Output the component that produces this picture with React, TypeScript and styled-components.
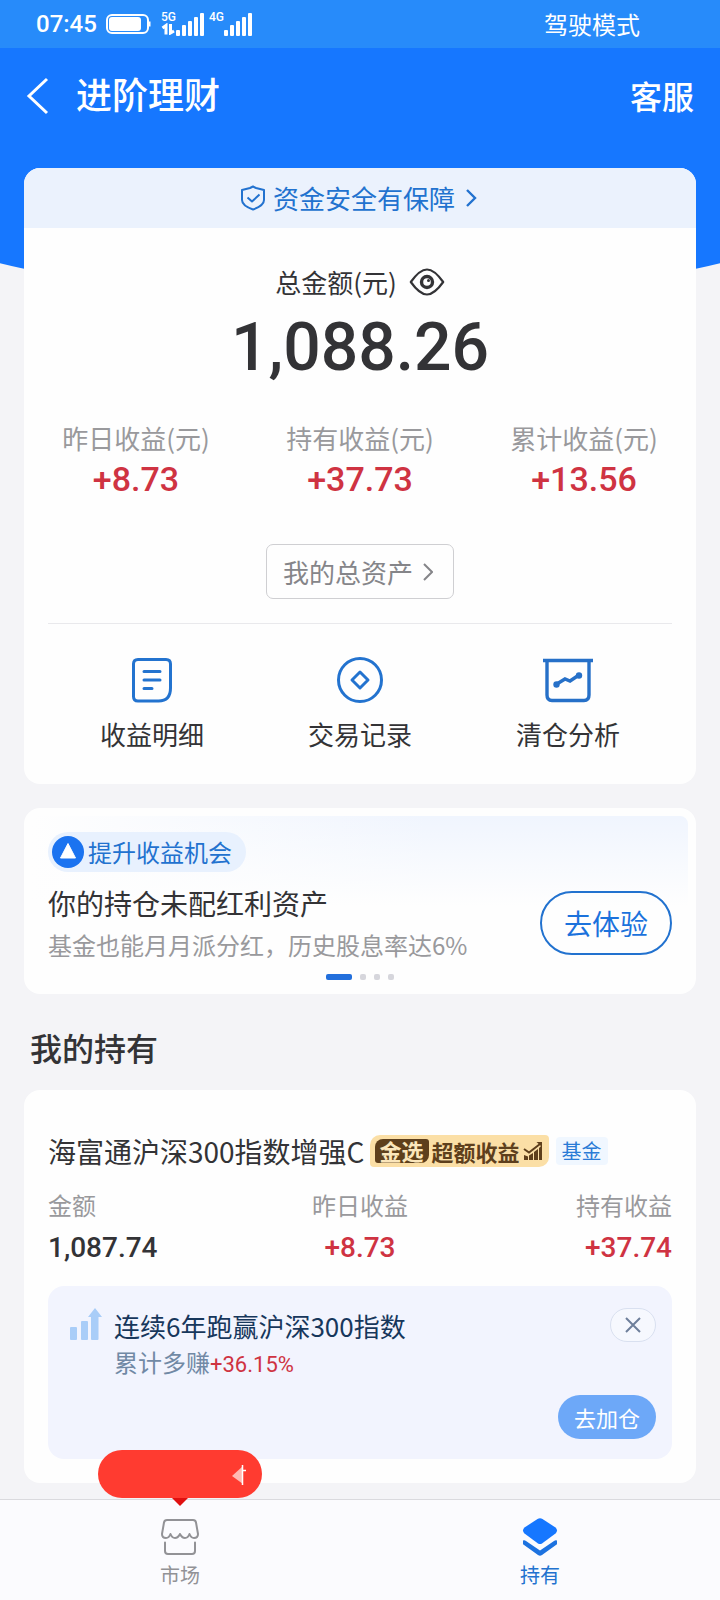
import React from "react";
import styled, { createGlobalStyle } from "styled-components";

const color = {
  brand: "#1677ff",
  link: "#2272cf",
  ink: "#333336",
  muted: "#99999c",
  red: "#cf3342",
  page: "#f4f4f7",
};

const numerals = `Roboto, "Noto Sans CJK SC", sans-serif`;

const GlobalStyle = createGlobalStyle`
  *, *::before, *::after { box-sizing: border-box; }
  body {
    margin: 0;
    background: ${color.page};
    color: ${color.ink};
    font-family: "Noto Sans CJK SC", "Noto Sans", sans-serif;
  }
  h1, h2, h3, p, dl, dd, dt { margin: 0; font-weight: 400; }
  a { color: inherit; text-decoration: none; }
  button { font-family: inherit; padding: 0; border: 0; background: none; cursor: pointer; }
  svg { display: block; flex: none; }
`;

const Page = styled.div`
  display: flex;
  flex-direction: column;
  min-height: 100vh;
`;

const Hero = styled.header`
  height: 304px;
  background: ${color.brand};
  color: #fff;
  clip-path: ellipse(100% 100% at 50% 0);
`;

const StatusBar = styled.div`
  display: flex;
  align-items: center;
  justify-content: space-between;
  height: 48px;
  padding: 0 80px 0 36px;
  background: #278bfa;
  font-size: 24px;
  line-height: 36px;
`;

const StatusLeft = styled.div`
  display: flex;
  align-items: center;
  gap: 9px;
`;

const Clock = styled.span`
  font-family: Roboto, sans-serif;
  font-weight: 500;
`;

const NavBar = styled.nav`
  display: flex;
  align-items: center;
  height: 96px;
  padding: 0 26px;
`;

const BackButton = styled.button`
  color: #fff;
`;

const Title = styled.h1`
  flex: 1;
  margin-left: 26px;
  padding-bottom: 6px;
  font-size: 36px;
  line-height: 48px;
  font-weight: 500;
`;

const ServiceLink = styled.a`
  padding-bottom: 2px;
  font-size: 32px;
  line-height: 48px;
  font-weight: 500;
`;

const Main = styled.main`
  flex: 1;
  margin-top: -136px;
  padding: 0 24px 16px;
  position: relative;
`;

const Card = styled.section`
  overflow: hidden;
  background: #fefefe;
  border-radius: 16px;
`;

const SafetyLink = styled.a`
  display: flex;
  align-items: center;
  justify-content: center;
  gap: 7px;
  height: 60px;
  background: #ebf2fd;
  color: ${color.link};
  font-size: 26px;
  line-height: 36px;
`;

const Total = styled.div`
  display: flex;
  flex-direction: column;
  align-items: center;
  padding-top: 36px;
`;

const TotalLabel = styled.div`
  display: flex;
  align-items: center;
  gap: 12px;
  font-size: 26px;
  line-height: 36px;
`;

const TotalValue = styled.strong`
  margin-top: 12px;
  font-family: ${numerals};
  font-size: 66px;
  line-height: 72px;
  font-weight: 500;
`;

const Earnings = styled.dl`
  display: grid;
  grid-template-columns: repeat(3, 1fr);
  margin-top: 36px;
  text-align: center;
`;

const EarningLabel = styled.dt`
  color: ${color.muted};
  font-size: 26px;
  line-height: 36px;
`;

const EarningValue = styled.dd`
  color: ${color.red};
  font-family: ${numerals};
  font-size: 34px;
  line-height: 46px;
  font-weight: 500;
`;

const AssetsButton = styled.button`
  display: flex;
  align-items: center;
  gap: 10px;
  height: 55px;
  margin: 42px auto 0;
  padding: 0 20px 0 16px;
  border: 1px solid #cfcfd2;
  border-radius: 7px;
  color: #858589;
  font-size: 26px;
  line-height: 36px;
`;

const Shortcuts = styled.nav`
  display: grid;
  grid-template-columns: repeat(3, 1fr);
  margin: 24px 24px 0;
  padding: 32px 0;
  border-top: 1px solid #e9e9ec;
`;

const Shortcut = styled.a`
  display: flex;
  flex-direction: column;
  align-items: center;
  gap: 12px;
  font-size: 26px;
  line-height: 36px;
`;

const PromoCard = styled(Card)`
  margin-top: 24px;
  padding: 16px 16px 6px;
  border: 8px solid #fefefe;
  background:
    linear-gradient(to bottom, rgba(254, 254, 254, 0) 0, #fefefe 90px),
    linear-gradient(to right, #fefefe, #f0f5fe 60%);
`;

const PromoTag = styled.div`
  display: inline-flex;
  align-items: center;
  gap: 4px;
  height: 40px;
  padding: 0 14px 0 4px;
  border-radius: 20px;
  background: #e8f1fe;
  color: ${color.link};
  font-size: 24px;
  line-height: 36px;
  vertical-align: top;
`;

const PromoRow = styled.div`
  display: flex;
  align-items: center;
  justify-content: space-between;
  margin-top: 11px;
`;

const PromoTitle = styled.h2`
  font-size: 28px;
  line-height: 40px;
`;

const PromoText = styled.p`
  margin-top: 4px;
  color: ${color.muted};
  font-size: 24px;
  line-height: 36px;
`;

const OutlineButton = styled.button`
  flex: none;
  width: 132px;
  height: 64px;
  border: 2px solid ${color.link};
  border-radius: 32px;
  color: #1b72dc;
  font-size: 28px;
  line-height: 40px;
`;

const Pager = styled.div`
  display: flex;
  justify-content: center;
  gap: 8px;
  margin-top: 11px;
`;

const PagerDot = styled.span<{ $active?: boolean }>`
  width: ${(p) => (p.$active ? 26 : 6)}px;
  height: 6px;
  border-radius: 2px;
  background: ${(p) => (p.$active ? "#226fdc" : "#d6d6dc")};
`;

const SectionTitle = styled.h2`
  margin: 29px 6px 19px;
  font-size: 32px;
  line-height: 48px;
  font-weight: 500;
`;

const HoldingCard = styled(Card)`
  padding: 40px 24px 24px;
`;

const HoldingHead = styled.div`
  display: flex;
  align-items: center;
  height: 42px;
`;

const HoldingName = styled.h3`
  font-size: 28px;
  line-height: 40px;
`;

const GoldBadge = styled.span`
  display: flex;
  align-items: center;
  gap: 3px;
  height: 32px;
  margin-left: 5px;
  padding: 0 6px 0 5px;
  border-radius: 10px 4px 10px 4px;
  background: #fbdfa6;
  color: #5e3f1c;
  font-size: 22px;
  line-height: 24px;
  font-weight: 700;
`;

const GoldMark = styled.span`
  height: 24px;
  padding: 0 5px;
  border-radius: 8px 3px 8px 3px;
  background: #5e3f1c;
  color: #fbe6bb;
  line-height: 22px;
`;

const FundTag = styled.span`
  margin-left: 7px;
  padding: 0 6px;
  border-radius: 4px;
  background: #f0f7ff;
  color: #2a7bd6;
  font-size: 20px;
  line-height: 28px;
`;

const Figures = styled.dl`
  display: grid;
  grid-template-columns: repeat(3, 1fr);
  margin-top: 16px;
`;

const Figure = styled.div<{ $align: "left" | "center" | "right" }>`
  text-align: ${(p) => p.$align};
`;

const FigureLabel = styled.dt`
  color: ${color.muted};
  font-size: 24px;
  line-height: 34px;
`;

const FigureValue = styled.dd<{ $gain?: boolean }>`
  margin-top: 4px;
  color: ${(p) => (p.$gain ? color.red : color.ink)};
  font-family: ${numerals};
  font-size: 28px;
  line-height: 44px;
  font-weight: 500;
`;

const Notice = styled.div`
  margin-top: 16px;
  padding: 22px 16px 20px 22px;
  border-radius: 16px;
  background: #f2f4fe;
`;

const NoticeTop = styled.div`
  display: flex;
  align-items: flex-start;
  gap: 12px;
`;

const NoticeBody = styled.div`
  flex: 1;
`;

const NoticeTitle = styled.p`
  color: #17375c;
  font-size: 26px;
  line-height: 36px;
`;

const NoticeText = styled.p`
  color: #7189a5;
  font-size: 24px;
  line-height: 36px;
`;

const Gain = styled.span`
  color: ${color.red};
  font-family: ${numerals};
  font-size: 22px;
  line-height: 1;
`;

const CloseButton = styled.button`
  display: flex;
  align-items: center;
  justify-content: center;
  width: 46px;
  height: 34px;
  border: 1px solid #d9e0f0;
  border-radius: 17px;
  background: #f6f8fe;
`;

const AddButton = styled.button`
  display: block;
  width: 98px;
  height: 44px;
  margin: 15px 0 0 auto;
  border-radius: 22px;
  background: #6da8f8;
  color: #fff;
  font-size: 22px;
  line-height: 32px;
`;

const TabBar = styled.nav`
  position: sticky;
  bottom: 0;
  display: grid;
  grid-template-columns: repeat(2, 1fr);
  border-top: 1px solid #dadade;
  background: #fbfbfe;
`;

const Tab = styled.a<{ $active?: boolean }>`
  position: relative;
  display: flex;
  flex-direction: column;
  align-items: center;
  gap: 5px;
  padding: 18px 0 11px;
  color: ${(p) => (p.$active ? color.link : "#929296")};
  font-size: 20px;
  line-height: 28px;
`;

const Bubble = styled.span`
  position: absolute;
  left: 50%;
  bottom: 102px;
  width: 164px;
  height: 48px;
  margin-left: -82px;
  padding: 15px 16px 0 0;
  border-radius: 24px;
  background: #ff3b30;
  display: flex;
  justify-content: flex-end;

  &::after {
    content: "";
    position: absolute;
    top: 48px;
    left: 50%;
    margin-left: -8px;
    border: 8px solid transparent;
    border-top-color: #e01010;
    border-bottom: 0;
  }
`;

const Chevron = () => (
  <svg width="18" height="20" viewBox="0 0 18 20" fill="none" stroke="currentColor" strokeWidth="2.400">
    <path d="M5 2l8 8-8 8" />
  </svg>
);

const Battery = () => (
  <svg width="45" height="20" viewBox="0 0 45 20" fill="none">
    <rect x="1" y="1" width="41" height="18" rx="5" stroke="#fff" strokeWidth="2" />
    <rect x="3" y="3" width="32" height="14" rx="3" fill="#fff" />
    <path d="M43 7.500h1.500v5H43z" fill="#fff" />
  </svg>
);

const SignalWrap = styled.span`
  display: flex;
  align-items: flex-start;
  height: 24px;
`;

const NetworkLabel = styled.span`
  display: flex;
  flex-direction: column;
  font-family: Roboto, sans-serif;
  font-size: 12px;
  line-height: 11px;
  font-weight: 500;
`;

const Signals = styled.span`
  display: flex;
  gap: 5px;
  margin-left: 1px;
`;

const Bars = () => (
  <svg width="28" height="24" viewBox="0 0 28 24" fill="#fff">
    <rect x="0" y="18" width="4" height="6" rx="1" />
    <rect x="6" y="13" width="4" height="11" rx="1" />
    <rect x="12" y="9" width="4" height="15" rx="1" />
    <rect x="18" y="5" width="4" height="19" rx="1" />
    <rect x="24" y="1" width="4" height="23" rx="1" />
  </svg>
);

const DataArrows = () => (
  <svg width="14" height="12" viewBox="0 0 14 12" fill="none" stroke="#fff" strokeWidth="3">
    <path d="M1.500 5L5 2.500v9M13 8L9.500 10V1" />
  </svg>
);

const BackIcon = () => (
  <svg width="24" height="38" viewBox="0 0 24 38" fill="none" stroke="currentColor" strokeWidth="3">
    <path d="M21 2L3 19l18 17" />
  </svg>
);

const ShieldIcon = () => (
  <svg width="26" height="26" viewBox="0 0 26 26" fill="none" stroke="currentColor" strokeWidth="2" strokeLinejoin="round">
    <path d="M13 1.500l3 1.500 8 2v10c0 4-4 7-11 9.500C6 22 2 19 2 15V5l8-2z" />
    <path d="M7.500 12.500l4.500 4 7.500-7" />
  </svg>
);

const EyeIcon = () => (
  <svg width="36" height="28" viewBox="0 0 36 28" fill="none" stroke={color.ink} strokeWidth="2.200">
    <path d="M1.800 14C5 9.500 11 1.500 18 1.500S31 9.500 34.200 14C31 18.500 25 26.500 18 26.500S5 18.500 1.800 14z" strokeLinejoin="round" />
    <circle cx="18" cy="14" r="5.500" strokeWidth="3.400" />
    <circle cx="19.500" cy="12.500" r="1.500" fill={color.ink} stroke="none" />
  </svg>
);

const DetailIcon = () => (
  <svg width="48" height="48" viewBox="0 0 48 48" fill="none" stroke="#2373cf" strokeWidth="3" strokeLinecap="round">
    <path d="M10 3.500h28q4.500 0 4.500 4.500v24q0 13-12 13H10q-4.500 0-4.500-4.500V8q0-4.500 4.500-4.500z" />
    <path d="M16 15.500h16M16 24h16M16 32.500h8" />
  </svg>
);

const RecordIcon = () => (
  <svg width="48" height="48" viewBox="0 0 48 48" fill="none" stroke="#2373cf" strokeWidth="3">
    <circle cx="24" cy="24" r="21.500" />
    <path d="M24 16l8 8-8 8-8-8z" strokeLinejoin="round" />
  </svg>
);

const AnalysisIcon = () => (
  <svg width="50" height="48" viewBox="0 0 50 48" fill="none" stroke="#2670c8" strokeWidth="3.400">
    <path d="M0 4.500h50" />
    <path d="M4 4.500V39q0 5.500 5 5.500h32q5 0 5-5.500V4.500" />
    <path d="M13 28.500l9-5.500 5 2 9-6" />
    <circle cx="13.500" cy="28.500" r="3.200" fill="#2670c8" stroke="none" />
    <circle cx="36" cy="19.500" r="3.200" fill="#2670c8" stroke="none" />
  </svg>
);

const UpIcon = () => (
  <svg width="32" height="32" viewBox="0 0 32 32">
    <circle cx="16" cy="16" r="16" fill="#1b73f0" />
    <path d="M16 7.500l7.500 14.500h-15z" fill="#fff" stroke="#fff" strokeWidth="1" strokeLinejoin="round" />
  </svg>
);

const GrowthIcon = () => (
  <svg width="20" height="20" viewBox="0 0 20 20" fill="#5e3f1c">
    <path d="M1 14l4 1.500V19H1zM6 14.500L10 12v7H6zM11 11l4-3v11h-4zM16 7l3-3v15h-3z" />
    <path d="M1 8l5 3.500L17 3" fill="none" stroke="#5e3f1c" strokeWidth="2" />
    <path d="M13.500 1H19v5z" />
  </svg>
);

const RiseIcon = () => (
  <svg width="32" height="34" viewBox="0 0 32 34" fill="#a9cdf8">
    <rect x="0" y="19" width="7" height="13" rx="1" />
    <rect x="11" y="13" width="7" height="19" rx="1" />
    <path d="M25 0l7 9h-3.500v22q0 1-1 1H22q-1 0-1-1V9h-3z" />
  </svg>
);

const CloseIcon = () => (
  <svg width="16" height="16" viewBox="0 0 16 16" fill="none" stroke="#6e7f9b" strokeWidth="2">
    <path d="M1 1l14 14M15 1L1 15" />
  </svg>
);

const MarketIcon = () => (
  <svg width="38" height="38" viewBox="0 0 38 38" fill="none" stroke="currentColor" strokeWidth="2" strokeLinecap="round" strokeLinejoin="round">
    <path d="M6 2h26q2.500 0 3 2.500L37 16q0 4-4 4-3 0-4.500-4-1.500 4-4.500 4t-5-4q-2 4-5 4t-4.500-4Q8 20 5 20q-4 0-4-4L3 4.500Q3.500 2 6 2z" />
    <path d="M4 24.500V33q0 3 3 3h24q3 0 3-3v-8.500" />
  </svg>
);

const HoldIcon = () => (
  <svg width="36" height="38" viewBox="0 0 36 38">
    <path d="M15.500 1q2.500-1.500 5 0l13 8.500q3 3 0 6L20 25.500q-2 1.200-4 0l-13.500-10q-3-3 0-6z" fill={color.brand} />
    <path d="M1 22.500q1.500-.8 3 .5l14 9.500L32 23q1.500-1.300 3-.5v3.800L20 37q-2 1.300-4 0L1 26.300z" fill="#1d72e0" />
  </svg>
);

const BubbleMark = () => (
  <svg width="14" height="21" viewBox="0 0 14 21">
    <path d="M11 1v18L0 11z" fill="#ffb9b2" />
    <path d="M10.500 0v20M10 5.500h4" stroke="#fff" strokeWidth="1.500" />
  </svg>
);

const earnings = [
  ["昨日收益(元)", "+8.73"],
  ["持有收益(元)", "+37.73"],
  ["累计收益(元)", "+13.56"],
];

const shortcuts = [
  { label: "收益明细", Icon: DetailIcon },
  { label: "交易记录", Icon: RecordIcon },
  { label: "清仓分析", Icon: AnalysisIcon },
];

export default function App() {
  return (
    <Page>
      <GlobalStyle />
      <Hero>
        <StatusBar>
          <StatusLeft>
            <Clock>07:45</Clock>
            <Battery />
            <Signals>
              <SignalWrap>
                <NetworkLabel>
                  5G
                  <DataArrows />
                </NetworkLabel>
                <Bars />
              </SignalWrap>
              <SignalWrap>
                <NetworkLabel>4G</NetworkLabel>
                <Bars />
              </SignalWrap>
            </Signals>
          </StatusLeft>
          <span>驾驶模式</span>
        </StatusBar>
        <NavBar>
          <BackButton type="button" aria-label="返回">
            <BackIcon />
          </BackButton>
          <Title>进阶理财</Title>
          <ServiceLink href="#service">客服</ServiceLink>
        </NavBar>
      </Hero>

      <Main>
        <Card>
          <SafetyLink href="#safety">
            <ShieldIcon />
            资金安全有保障
            <Chevron />
          </SafetyLink>
          <Total>
            <TotalLabel>
              总金额(元)
              <button type="button" aria-label="隐藏金额">
                <EyeIcon />
              </button>
            </TotalLabel>
            <TotalValue>1,088.26</TotalValue>
          </Total>
          <Earnings>
            {earnings.map(([label, value]) => (
              <div key={label}>
                <EarningLabel>{label}</EarningLabel>
                <EarningValue>{value}</EarningValue>
              </div>
            ))}
          </Earnings>
          <AssetsButton type="button">
            我的总资产
            <svg width="10" height="18" viewBox="0 0 10 18" fill="none" stroke="currentColor" strokeWidth="2">
              <path d="M1 1l8 8-8 8" />
            </svg>
          </AssetsButton>
          <Shortcuts>
            {shortcuts.map(({ label, Icon }) => (
              <Shortcut key={label} href="#shortcut">
                <Icon />
                {label}
              </Shortcut>
            ))}
          </Shortcuts>
        </Card>

        <PromoCard>
          <PromoTag>
            <UpIcon />
            提升收益机会
          </PromoTag>
          <PromoRow>
            <div>
              <PromoTitle>你的持仓未配红利资产</PromoTitle>
              <PromoText>基金也能月月派分红，历史股息率达6%</PromoText>
            </div>
            <OutlineButton type="button">去体验</OutlineButton>
          </PromoRow>
          <Pager>
            <PagerDot $active />
            <PagerDot />
            <PagerDot />
            <PagerDot />
          </Pager>
        </PromoCard>

        <SectionTitle>我的持有</SectionTitle>

        <HoldingCard>
          <HoldingHead>
            <HoldingName>海富通沪深300指数增强C</HoldingName>
            <GoldBadge>
              <GoldMark>金选</GoldMark>
              超额收益
              <GrowthIcon />
            </GoldBadge>
            <FundTag>基金</FundTag>
          </HoldingHead>
          <Figures>
            <Figure $align="left">
              <FigureLabel>金额</FigureLabel>
              <FigureValue>1,087.74</FigureValue>
            </Figure>
            <Figure $align="center">
              <FigureLabel>昨日收益</FigureLabel>
              <FigureValue $gain>+8.73</FigureValue>
            </Figure>
            <Figure $align="right">
              <FigureLabel>持有收益</FigureLabel>
              <FigureValue $gain>+37.74</FigureValue>
            </Figure>
          </Figures>
          <Notice>
            <NoticeTop>
              <RiseIcon />
              <NoticeBody>
                <NoticeTitle>连续6年跑赢沪深300指数</NoticeTitle>
                <NoticeText>
                  累计多赚<Gain>+36.15%</Gain>
                </NoticeText>
              </NoticeBody>
              <CloseButton type="button" aria-label="关闭">
                <CloseIcon />
              </CloseButton>
            </NoticeTop>
            <AddButton type="button">去加仓</AddButton>
          </Notice>
        </HoldingCard>
      </Main>

      <TabBar>
        <Tab href="#market">
          <Bubble>
            <BubbleMark />
          </Bubble>
          <MarketIcon />
          市场
        </Tab>
        <Tab href="#holdings" $active aria-current="page">
          <HoldIcon />
          持有
        </Tab>
      </TabBar>
    </Page>
  );
}
